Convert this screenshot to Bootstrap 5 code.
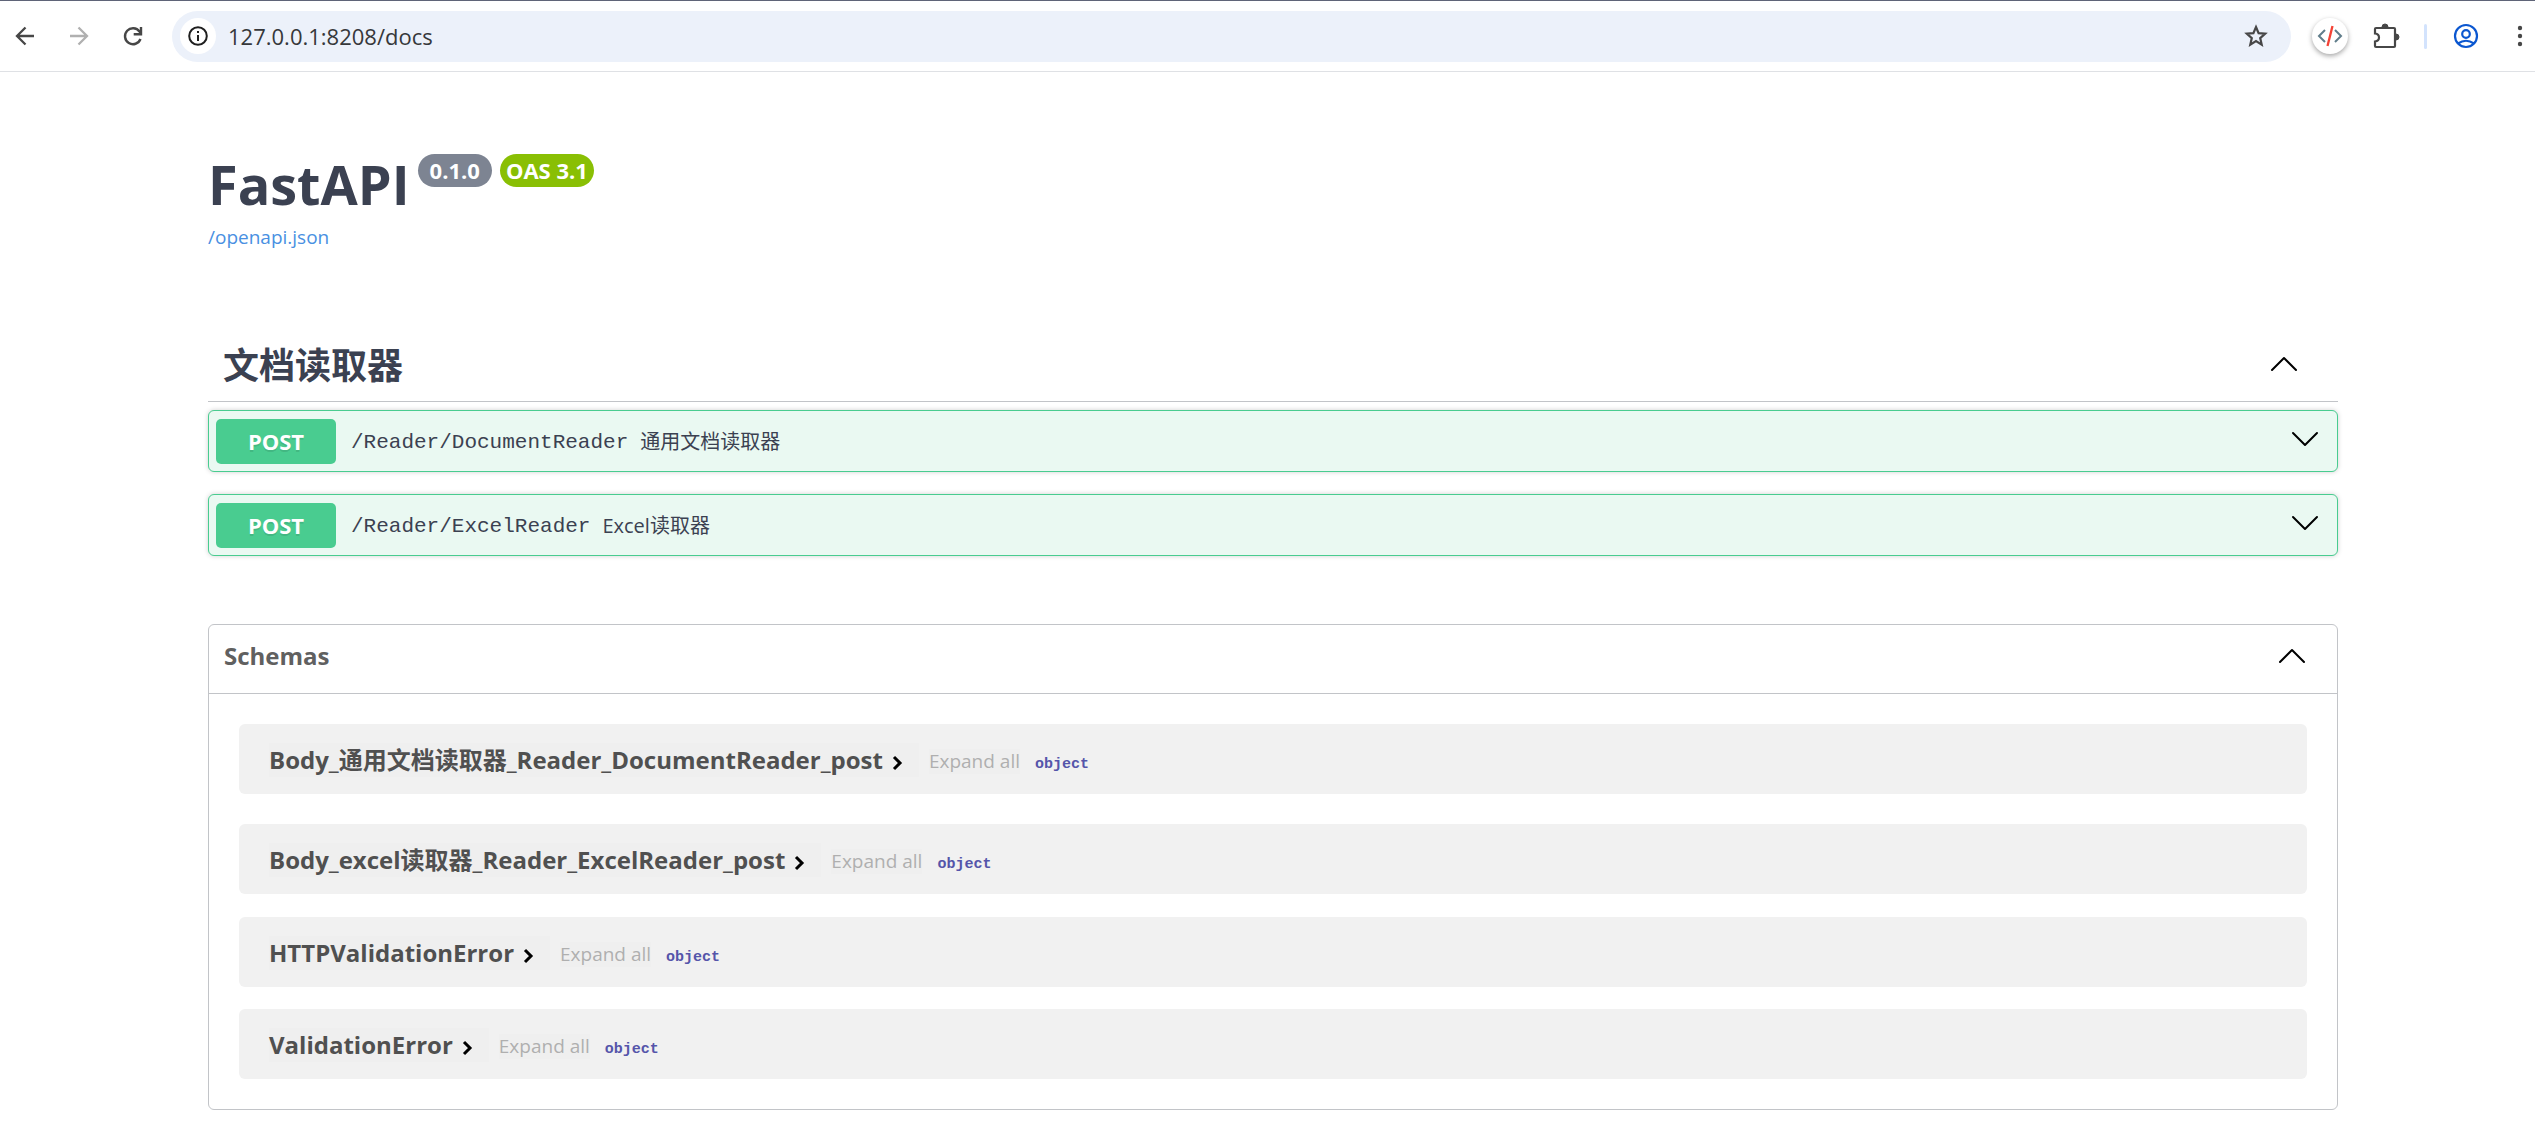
<!DOCTYPE html>
<html lang="zh-CN">
<head>
<meta charset="utf-8">
<meta name="viewport" content="width=device-width, initial-scale=1">
<title>FastAPI - Swagger UI</title>
<link href="https://cdn.jsdelivr.net/npm/bootstrap@5.3.0/dist/css/bootstrap.min.css" rel="stylesheet">
<style>
  body { font-family: "Open Sans", "Noto Sans CJK SC", sans-serif; color: #3b4151; background: #fff; }
  svg { display: block; flex: none; }
  button { font-family: inherit; }
  .plain-btn { border: 0; padding: 0; background: none; color: inherit; }

  /* browser bar */
  .toolbar { height: 72px; border-top: 1px solid #5f6478; border-bottom: 1px solid #dfe1e5; padding: 0 3px 0 13px; }
  .nav-icons { gap: 30px; margin-right: 27px; }
  .omnibox { height: 51px; background: #ecf1fa; border-radius: 26px; padding: 0 23px 0 8px; }
  .site-info { width: 36px; height: 36px; background: #fff; }
  .omnibox input { font-size: 22px; line-height: 30px; color: #36383b; background: none; border: 0; outline: 0; margin-left: 12px; padding: 0; }
  .tool-icons { margin-left: 21px; }
  .ext-round { width: 36px; height: 36px; background: #fff; box-shadow: 0 2px 5px rgba(0,0,0,.35); }
  .tool-sep { width: 3px; height: 25px; background: #d3e3fd; margin: 0 26px 0 24px; }
  .menu-btn { margin-left: 29px; }

  /* documentation */
  .docs { padding: 82px 197px 23px 208px; }
  .api-title { font-size: 54px; line-height: 60px; font-weight: 700; margin: 0; }
  .pill { font-size: 22px; line-height: 33px; font-weight: 700; color: #fff; border-radius: 17px; }
  .pill-version { background: #7d8492; padding: 0 12px; }
  .pill-oas { background: #89bf04; padding: 0 6px; }
  .spec-link { display: inline-block; font-size: 19px; line-height: 24px; color: #4990e2; text-decoration: none; margin-top: 11px; }
  .tag-head { height: 75px; margin-top: 77px; border-bottom: 1px solid #c2c4c8; padding: 0 40px 0 15px; }
  .tag-head h2 { font-size: 36px; line-height: 44px; font-weight: 700; margin: 3px 0 0; }
  .ops { gap: 22px; margin-top: 8px; }
  .op-row { height: 62px; width: 100%; border: 1px solid #49cc90; border-radius: 6px; background: #eaf9f2; box-shadow: 0 0 5px rgba(0,0,0,.19); padding: 0 18px 0 7px; color: #3b4151; }
  .verb { width: 120px; height: 45px; border-radius: 5px; background: #49cc90; color: #fff; font-size: 22px; line-height: 45px; font-weight: 700; text-shadow: 0 2px 0 rgba(0,0,0,.1); margin-right: 15px; }
  .op-path { font-family: "Liberation Mono", monospace; font-size: 21px; line-height: 30px; margin: 4px 12px 0 0; }
  .op-note { font-size: 20px; line-height: 30px; margin-top: 2px; }

  .schemas { margin-top: 68px; border: 1px solid #c2c4c8; border-radius: 6px; }
  .schemas-head { height: 69px; width: 100%; border-bottom: 1px solid #c2c4c8; padding: 0 31px 6px 15px; color: #606060; font-size: 24px; line-height: 30px; }
  .models { padding: 30px; }
  .model-row { height: 70px; border-radius: 6px; background: #f1f1f1; padding: 2px 30px 0; margin-bottom: 22px; }
  .model-row:first-child { margin-bottom: 30px; }
  .model-row:nth-child(2) { margin-bottom: 23px; }
  .model-row:last-child { margin-bottom: 0; }
  .model-name { font-size: 24px; line-height: 34px; font-weight: 700; color: #505050; background: #efefef; padding-right: 15px; }
  .model-name svg { margin: 5px 0 0 9px; }
  .expand-all { font-size: 19px; line-height: 25px; color: #afafaf; background: #efefef; margin: 3px 15px 0 10px; }
  .model-type { font-family: "Liberation Mono", monospace; font-size: 15px; line-height: 20px; font-weight: 700; color: #5555aa; margin-top: 9px; }
</style>
<script src="https://cdn.jsdelivr.net/npm/bootstrap@5.3.0/dist/js/bootstrap.bundle.min.js"></script>
</head>
<body>
<svg width="0" height="0" class="position-absolute" aria-hidden="true">
  <symbol id="chev-down" viewBox="0 0 28 16"><path d="M2 2l12 12L26 2" fill="none" stroke="#000" stroke-width="2" stroke-linecap="round" stroke-linejoin="round"/></symbol>
  <symbol id="chev-up" viewBox="0 0 28 16"><path d="M2 14L14 2l12 12" fill="none" stroke="#000" stroke-width="2" stroke-linecap="round" stroke-linejoin="round"/></symbol>
  <symbol id="chev-right" viewBox="0 0 12 16"><path d="M2 2l6 6-6 6" fill="none" stroke="#000" stroke-width="3"/></symbol>
</svg>

<header class="toolbar d-flex align-items-center">
  <div class="nav-icons d-flex">
    <button class="plain-btn" type="button" aria-label="Back"><svg width="24" height="24" viewBox="0 0 24 24" fill="none" stroke="#474747" stroke-width="2.300"><path d="M21 12H5M12.500 3.500L4 12l8.500 8.500"/></svg></button>
    <button class="plain-btn" type="button" aria-label="Forward"><svg width="24" height="24" viewBox="0 0 24 24" fill="none" stroke="#b0b0b0" stroke-width="2.300"><path d="M3 12h16M11.500 3.500L20 12l-8.500 8.500"/></svg></button>
    <button class="plain-btn" type="button" aria-label="Reload"><svg width="24" height="24" viewBox="0 0 24 24" fill="none" stroke="#474747" stroke-width="2.400"><path d="M19.500 15A8 8 0 1 1 18.500 7.500L20 9.500"/><path d="M20 3v7.300h-7.300"/></svg></button>
  </div>
  <div class="omnibox d-flex align-items-center flex-grow-1">
    <button class="plain-btn site-info rounded-circle d-flex align-items-center justify-content-center" type="button" aria-label="Site information"><svg width="20" height="20" viewBox="0 0 20 20"><circle cx="10" cy="10" r="8.800" fill="none" stroke="#1f1f1f" stroke-width="2"/><path d="M9 9h2v6H9zM9 5h2v2H9z" fill="#1f1f1f"/></svg></button>
    <input class="flex-grow-1" type="text" aria-label="Address" value="127.0.0.1:8208/docs">
    <button class="plain-btn" type="button" aria-label="Bookmark"><svg width="24" height="24" viewBox="0 0 24 24" fill="none" stroke="#474747" stroke-width="2.200"><path d="M12 3l2.600 6.100 6.600.6-5 4.400 1.500 6.500-5.700-3.500-5.700 3.500 1.500-6.500-5-4.400 6.600-.6z"/></svg></button>
  </div>
  <div class="tool-icons d-flex align-items-center">
    <button class="plain-btn ext-round rounded-circle d-flex align-items-center justify-content-center" type="button" aria-label="Code extension"><svg width="26" height="22" viewBox="0 0 26 22" fill="none" stroke-width="2"><path d="M8 5l-6 6 6 6M18 5l6 6-6 6" stroke="#607d8b"/><path d="M15.500 1L10.500 21" stroke="#f44336" stroke-width="2.300"/></svg></button>
    <button class="plain-btn ms-4" type="button" aria-label="Extensions"><svg width="28" height="28" viewBox="0 0 28 28"><path d="M4 6h18a1 1 0 0 1 1 1v17a1 1 0 0 1-1 1H4a1 1 0 0 1-1-1v-4.500q4-.5 4-4t-4-4V7a1 1 0 0 1 1-1z" fill="none" stroke="#474747" stroke-width="2.200"/><path d="M10 5a3 3 0 0 1 6 0zM24 12a3 3 0 0 1 0 6z" fill="#474747" stroke="#474747"/></svg></button>
    <div class="tool-sep rounded"></div>
    <button class="plain-btn" type="button" aria-label="Profile"><svg width="26" height="26" viewBox="0 0 26 26" fill="none" stroke="#0b57d0" stroke-width="2.200"><circle cx="13" cy="13" r="11"/><circle cx="13" cy="11" r="3.800"/><path d="M5 20.500q8-5.500 16 0"/></svg></button>
    <button class="plain-btn menu-btn" type="button" aria-label="Menu"><svg width="24" height="26" viewBox="0 0 24 26" fill="#474747"><circle cx="12" cy="5" r="2.200"/><circle cx="12" cy="13" r="2.200"/><circle cx="12" cy="21" r="2.200"/></svg></button>
  </div>
</header>

<main class="docs">
  <div class="d-flex align-items-start gap-2">
    <h1 class="api-title">FastAPI</h1>
    <span class="pill pill-version">0.1.0</span>
    <span class="pill pill-oas">OAS 3.1</span>
  </div>
  <a class="spec-link" href="#">/openapi.json</a>

  <section>
    <div class="tag-head d-flex align-items-center justify-content-between">
      <h2>文档读取器</h2>
      <button class="plain-btn" type="button" aria-label="Collapse operations"><svg width="28" height="16"><use href="#chev-up"/></svg></button>
    </div>
    <div class="ops d-flex flex-column">
      <button class="op-row d-flex align-items-center" type="button">
        <span class="verb text-center">POST</span><span class="op-path">/Reader/DocumentReader</span><span class="op-note">通用文档读取器</span>
        <svg class="ms-auto mb-1" width="28" height="16"><use href="#chev-down"/></svg>
      </button>
      <button class="op-row d-flex align-items-center" type="button">
        <span class="verb text-center">POST</span><span class="op-path">/Reader/ExcelReader</span><span class="op-note">Excel读取器</span>
        <svg class="ms-auto mb-1" width="28" height="16"><use href="#chev-down"/></svg>
      </button>
    </div>
  </section>

  <section class="schemas">
    <div class="schemas-head d-flex align-items-center">
      <button class="plain-btn fw-bold d-flex align-items-center justify-content-between w-100" type="button">Schemas<svg width="28" height="16"><use href="#chev-up"/></svg></button>
    </div>
    <div class="models">
      <div class="model-row d-flex align-items-center">
        <button class="plain-btn model-name d-flex align-items-center" type="button">Body_通用文档读取器_Reader_DocumentReader_post<svg width="12" height="16"><use href="#chev-right"/></svg></button>
        <button class="plain-btn expand-all" type="button">Expand all</button><span class="model-type">object</span>
      </div>
      <div class="model-row d-flex align-items-center">
        <button class="plain-btn model-name d-flex align-items-center" type="button">Body_excel读取器_Reader_ExcelReader_post<svg width="12" height="16"><use href="#chev-right"/></svg></button>
        <button class="plain-btn expand-all" type="button">Expand all</button><span class="model-type">object</span>
      </div>
      <div class="model-row d-flex align-items-center">
        <button class="plain-btn model-name d-flex align-items-center" type="button">HTTPValidationError<svg width="12" height="16"><use href="#chev-right"/></svg></button>
        <button class="plain-btn expand-all" type="button">Expand all</button><span class="model-type">object</span>
      </div>
      <div class="model-row d-flex align-items-center">
        <button class="plain-btn model-name d-flex align-items-center" type="button">ValidationError<svg width="12" height="16"><use href="#chev-right"/></svg></button>
        <button class="plain-btn expand-all" type="button">Expand all</button><span class="model-type">object</span>
      </div>
    </div>
  </section>
</main>
</body>
</html>
